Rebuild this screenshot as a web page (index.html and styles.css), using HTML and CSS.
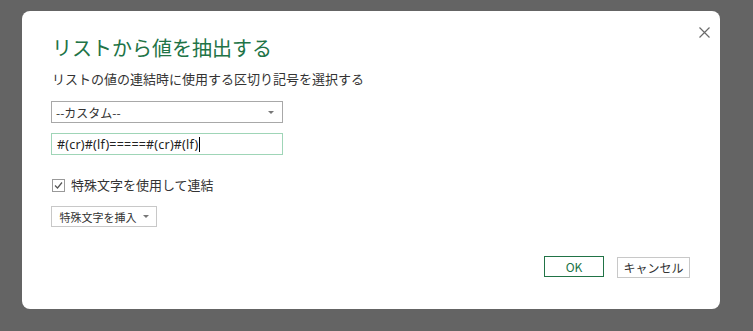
FILE: index.html
```html
<!DOCTYPE html>
<html lang="ja">
<head>
    <meta charset="UTF-8">
    <title>リストから値を抽出する</title>
    <link rel="stylesheet" href="styles.css">
</head>
<body>
    <div class="dialog">
        <button class="close-btn" type="button" aria-label="閉じる">
            <svg width="11" height="11" viewBox="0 0 11 11"><path d="M0.5 0.5 L10.5 10.5 M10.5 0.5 L0.5 10.5" stroke="#6a6a6a" stroke-width="1.2" fill="none"/></svg>
        </button>

        <div class="dialog-title">リストから値を抽出する</div>
        <div class="dialog-desc">リストの値の連結時に使用する区切り記号を選択する</div>

        <div class="select-box">
            <span>--カスタム--</span>
            <span class="caret"></span>
        </div>

        <div class="text-input">#(cr)#(lf)=====#(cr)#(lf)<span class="cursor"></span></div>

        <label class="check-row">
            <span class="check-box">
                <svg width="11" height="11" viewBox="0 0 11 11"><path d="M2 5.5 L4.5 8 L9 2.5" stroke="#555" stroke-width="1.2" fill="none"/></svg>
            </span>
            特殊文字を使用して連結
        </label>

        <div class="insert-btn">特殊文字を挿入 <span class="caret"></span></div>

        <div class="footer">
            <button class="btn btn-ok" type="button">OK</button>
            <button class="btn btn-cancel" type="button">キャンセル</button>
        </div>
    </div>
</body>
</html>
```

FILE: styles.css
```css
body {
    margin: 0;
    background-color: #646464;
    font-family: 'Noto Sans CJK JP', 'Noto Sans', sans-serif;
    padding: 11px 33px 22px 22px;
    height: 331px;
    box-sizing: border-box;
}

.dialog {
    position: relative;
    background-color: #fff;
    border-radius: 8px;
    width: 698px;
    height: 298px;
    box-sizing: border-box;
    padding: 23px 30px 0 29px;
    display: flex;
    flex-direction: column;
    align-items: flex-start;
}

.close-btn {
    position: absolute;
    top: 16px;
    right: 10px;
    background: none;
    border: none;
    padding: 0;
    width: 11px;
    height: 11px;
    display: flex;
}

.dialog-title {
    font-size: 20px;
    color: #217346;
    line-height: 28px;
    padding-left: 1px;
}

.dialog-desc {
    font-size: 13px;
    color: #333;
    line-height: 18px;
    margin-top: 8px;
    padding-left: 1px;
}

.select-box {
    margin-top: 13px;
    width: 232px;
    height: 22px;
    border: 1px solid #a8a8a8;
    box-sizing: border-box;
    display: flex;
    align-items: center;
    justify-content: space-between;
    padding: 0 8px 0 4px;
    font-size: 12px;
    color: #333;
}

.caret {
    display: inline-block;
    width: 0;
    height: 0;
    border-left: 3px solid transparent;
    border-right: 3px solid transparent;
    border-top: 3px solid #777;
}

.text-input {
    margin-top: 10px;
    width: 232px;
    height: 22px;
    border: 1px solid #9fd5b7;
    box-sizing: border-box;
    display: flex;
    align-items: center;
    padding: 0 5px;
    font-family: 'Noto Sans', sans-serif;
    font-size: 12.5px;
    letter-spacing: 0.2px;
    color: #222;
}

.cursor {
    display: inline-block;
    width: 1px;
    height: 15px;
    background-color: #000;
    margin-left: 1px;
}

.check-row {
    margin-top: 21px;
    margin-left: 1px;
    display: flex;
    align-items: center;
    font-size: 13px;
    color: #333;
    line-height: 18px;
}

.check-box {
    width: 11px;
    height: 11px;
    border: 1px solid #999;
    margin-right: 6px;
    display: flex;
}

.insert-btn {
    margin-top: 12px;
    width: 106px;
    height: 21px;
    border: 1px solid #c8c8c8;
    box-sizing: border-box;
    display: flex;
    align-items: center;
    justify-content: center;
    gap: 6px;
    font-size: 11px;
    color: #333;
}

.footer {
    align-self: stretch;
    display: flex;
    justify-content: flex-end;
    align-items: flex-start;
    gap: 13px;
    margin-top: 29px;
    padding-right: 0;
}

.btn {
    height: 21px;
    background-color: #fff;
    font-family: 'Noto Sans CJK JP', sans-serif;
    font-size: 12px;
    color: #333;
    padding: 0;
    box-sizing: border-box;
}

.btn-ok {
    width: 60px;
    border: 1px solid #217346;
    color: #217346;
}

.btn-cancel {
    width: 73px;
    border: 1px solid #c8c8c8;
    margin-top: 1px;
}
```
